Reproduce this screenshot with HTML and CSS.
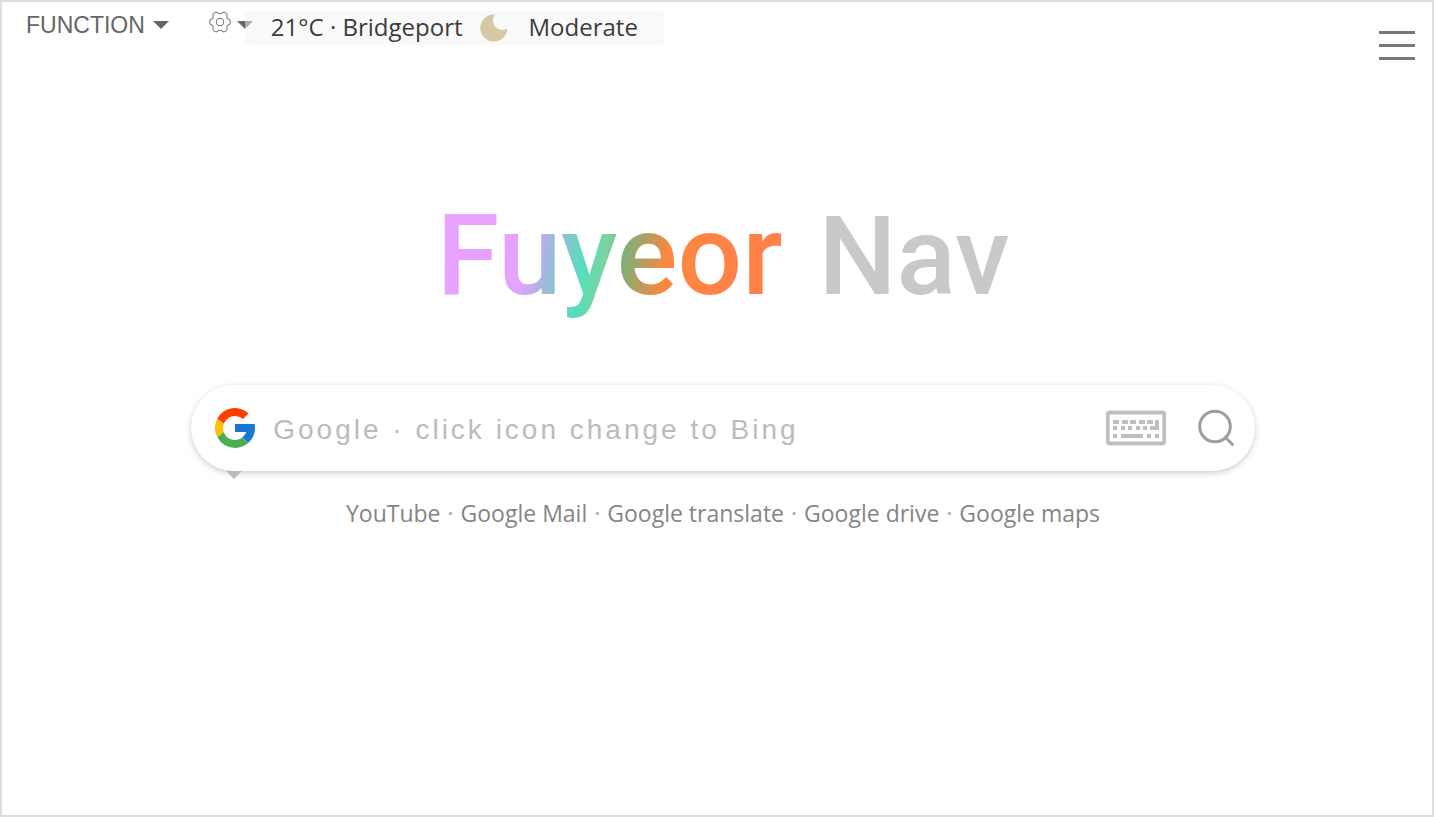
FILE: index.html
```html
<!DOCTYPE html>
<html lang="en">
<head>
  <meta charset="UTF-8">
  <meta name="viewport" content="width=device-width, initial-scale=1">
  <title>Fuyeor Nav</title>
  <link rel="stylesheet" href="styles.css">
</head>
<body>

  <header class="topbar">
    <button type="button" class="function-btn">FUNCTION <span class="caret"></span></button>
    <button type="button" class="setting-btn" aria-label="Settings">
      <svg class="gear" viewBox="0 0 24 24" fill="none" stroke="#777" stroke-width="1.1" stroke-linejoin="round">
        <path d="M6.8 1.5 Q8 .8 9 1.8 Q12 4.3 15 1.8 Q16 .8 17.2 1.5 L19 2.6 Q20 3.3 19.6 4.5 Q18.8 8.2 22 9.2 Q23.2 9.6 23.2 10.8 V13.2 Q23.2 14.4 22 14.8 Q18.8 15.8 19.6 19.5 Q20 20.7 19 21.4 L17.2 22.5 Q16 23.2 15 22.2 Q12 19.7 9 22.2 Q8 23.2 6.8 22.5 L5 21.4 Q4 20.7 4.4 19.5 Q5.2 15.8 2 14.8 Q.8 14.4 .8 13.2 V10.8 Q.8 9.6 2 9.2 Q5.2 8.2 4.4 4.5 Q4 3.3 5 2.6 Z"/>
        <circle cx="12" cy="12" r="4"/>
      </svg>
      <span class="caret"></span>
    </button>

    <div class="weather">
      <span>21°C · Bridgeport</span>
      <svg class="moon" viewBox="0 0 28 28">
        <path d="M15 .6 A13.5 13.5 0 1 0 27.3 14.5 A9.4 9.4 0 0 1 15 .6 Z" fill="#d5c9a3"/>
      </svg>
      <span>Moderate</span>
    </div>

    <button type="button" class="menu-btn" aria-label="Menu">
      <span></span>
      <span></span>
      <span></span>
    </button>
  </header>

  <main>
    <h1 class="logo"><span class="logo-name">Fuyeor</span> <span class="logo-nav">Nav</span></h1>

    <form class="search" onsubmit="return false">
      <button type="button" class="engine-btn" aria-label="Change search engine">
        <svg viewBox="4 4 40 40">
          <path fill="#1976d2" d="M43.6 20 H24 v8 h11.3 A12 12 0 0 1 31.2 33.6 L37.4 38.8 C41.5 35 44 30 44 24 C44 22.6 43.9 21.3 43.6 20 Z"/>
          <path fill="#4caf50" d="M24 44 C29.2 44 33.9 42 37.4 38.8 L31.2 33.6 A12 12 0 0 1 12.7 28 L6.2 33 A20 20 0 0 0 24 44 Z"/>
          <path fill="#ffc107" d="M6.3 14.7 A20 20 0 0 0 6.2 33 L12.7 28 A12 12 0 0 1 12.9 19.5 Z"/>
          <path fill="#ff3d00" d="M6.3 14.7 L12.9 19.5 A12 12 0 0 1 32 15.1 L37.6 9.4 A20 20 0 0 0 6.3 14.7 Z"/>
        </svg>
      </button>
      <input type="text" class="search-input" aria-label="Search" placeholder="Google · click icon change to Bing">
      <button type="button" class="keyboard-btn" aria-label="Keyboard">
        <svg viewBox="0 0 60 36">
          <rect x="1.7" y="2.5" width="56.6" height="31" rx="2" fill="none" stroke="#bfbfbf" stroke-width="3.8"/>
          <g fill="#bfbfbf">
            <path d="M7 10h6v4H7z M16 10h6v4h-6z M24 10h6v4h-6z M33 10h6v4h-6z M41 10h6v4h-6z"/>
            <path d="M7 16h4v4H7z M15 16h4v4h-4z M22 16h4v4h-4z M30 16h4v4h-4z M37 16h4v4h-4z"/>
            <path d="M49 10h4v10h-9v-4h5z"/>
            <path d="M7 24h4v4H7z M15 24h22v4H15z M41 24h4v4h-4z M49 24h4v4h-4z"/>
          </g>
        </svg>
      </button>
      <button type="submit" class="search-btn" aria-label="Search">
        <svg viewBox="0 0 38 38" fill="none" stroke="#9e9e9e" stroke-width="3" stroke-linecap="round">
          <circle cx="18" cy="17.5" r="15.3"/>
          <path d="M28.5 28.5 L35.5 35.5"/>
        </svg>
      </button>
      <span class="engine-arrow"></span>
    </form>

    <nav class="links">
      <a href="#">YouTube</a><i>·</i>
      <a href="#">Google Mail</a><i>·</i>
      <a href="#">Google translate</a><i>·</i>
      <a href="#">Google drive</a><i>·</i>
      <a href="#">Google maps</a>
    </nav>
  </main>

</body>
</html>
```
FILE: styles.css
```css
* {
  box-sizing: border-box;
}
body {
  margin: 0;
  min-height: 100vh;
  border: 2px solid #ddd;
  background: #fff;
  font-family: "Open Sans", "Noto Sans", sans-serif;
}
button {
  padding: 0;
  border: none;
  background: none;
  cursor: pointer;
}
svg {
  display: block;
}

/* top bar */
.topbar {
  display: flex;
  align-items: flex-start;
  padding: 9px 17px 0 24px;
}
.function-btn {
  display: flex;
  align-items: center;
  gap: 8px;
  height: 28px;
  font-family: "Liberation Sans", Arial, sans-serif;
  font-size: 23px;
  color: #666;
}
.caret {
  border: 8px solid transparent;
  border-top-color: #666;
  border-bottom: 0;
}
.setting-btn {
  display: flex;
  align-items: center;
  gap: 6px;
  height: 28px;
  margin-left: 40px;
}
.gear {
  width: 22px;
  height: 22px;
  margin-bottom: 6px;
}
.weather {
  position: relative;
  display: flex;
  align-items: center;
  height: 34px;
  margin-left: -8px;
  padding: 0 26px 3px;
  border-radius: 5px;
  background: rgba(244, 244, 244, 0.5);
  font-size: 24px;
  color: #3c3c3c;
}
.moon {
  width: 28px;
  height: 28px;
  margin: 3px 21px 0 17px;
}
.menu-btn {
  display: flex;
  flex-direction: column;
  gap: 10px;
  width: 36px;
  margin: 20px 0 0 auto;
}
.menu-btn span {
  height: 3px;
  background: #777;
}

/* logo + search */
main {
  display: flex;
  flex-direction: column;
  align-items: center;
  padding: 115px 0 40px 12px;
}
.logo {
  display: flex;
  align-items: baseline;
  gap: 36px;
  margin: 0;
  font-family: Roboto, sans-serif;
  line-height: 160px;
  font-weight: 500;
}
.logo-name {
  background: linear-gradient(100deg, #e8a3ff 0%, #e6a2ff 27%, #a9b4e2 33%, #84c6cf 38%, #55debb 44%, #7ed3a0 49%, #7cb077 54%, #ff8640 66%, #ff7f4c 100%);
  -webkit-background-clip: text;
  background-clip: text;
  color: transparent;
  font-size: 114px;
}
.logo-nav {
  color: #c9c9c9;
  font-size: 110px;
}
.search {
  position: relative;
  display: flex;
  align-items: center;
  width: 75%;
  height: 86px;
  margin-top: 48px;
  padding: 0 20px 0 24px;
  border-radius: 43px;
  background: #fff;
  box-shadow: 0 2px 6px rgba(0, 0, 0, 0.2);
}
.engine-btn svg {
  width: 40px;
  height: 40px;
}
.search-input {
  flex: 1;
  min-width: 0;
  height: 60px;
  margin: 0 18px;
  padding: 3px 0 0;
  border: none;
  outline: none;
  background: none;
  font-family: "Liberation Sans", Arial, sans-serif;
  font-size: 28px;
  letter-spacing: 3px;
}
.search-input::placeholder {
  color: #bbb;
}
.keyboard-btn svg {
  width: 60px;
  height: 36px;
}
.search-btn {
  margin-left: 31px;
}
.search-btn svg {
  width: 38px;
  height: 38px;
}
.engine-arrow {
  position: absolute;
  top: 100%;
  left: 35px;
  border: 8px solid transparent;
  border-top-color: #bbb;
  border-bottom: 0;
}
.links {
  display: flex;
  align-items: center;
  gap: 7px;
  margin-top: 26px;
  font-size: 23px;
  line-height: 32px;
  color: #aaa;
}
.links a {
  color: #858585;
  text-decoration: none;
}
.links i {
  font-style: normal;
}
```
